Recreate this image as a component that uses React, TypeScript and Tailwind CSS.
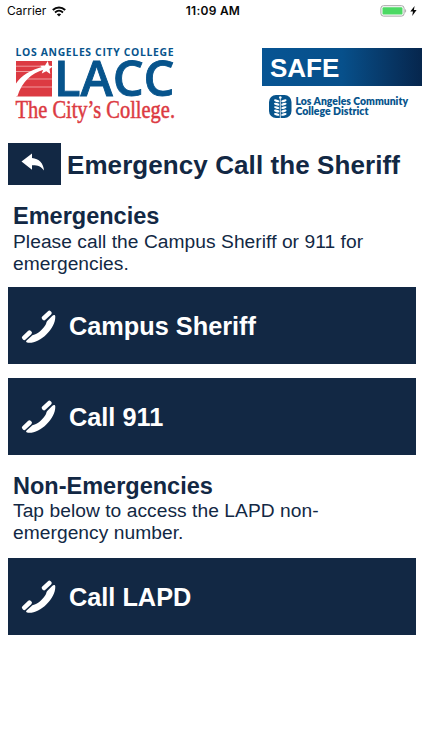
import React from 'react';

interface CallButtonProps {
  label: string;
}

interface SectionProps {
  title: string;
  children: React.ReactNode;
}

const PhoneIcon = () => (
  <svg className="w-[36px] h-[36px] shrink-0" viewBox="0 0 36 36" fill="#fff">
    <path d="M6 33.6C4.8 33.2 4.9 32.3 5.6 31.6L10.6 26.9C11.6 26 12.6 26.1 13.7 25.6C18.5 23.3 23 19 25 14.9C25.6 13.6 25.3 12.9 26.2 12L31.4 6.8C32.7 5.6 34.1 5.8 34.3 7.4C34.6 20.5 17 36 6 33.6Z" />
    <rect x="-5.8" y="-2.3" width="11.6" height="4.6" rx="1.9" transform="translate(25.7 6.5) rotate(-43)" />
    <rect x="-5.8" y="-2.3" width="11.6" height="4.6" rx="1.9" transform="translate(5.9 26.2) rotate(-43)" />
  </svg>
);

const StatusBar = () => (
  <div className="h-[22px] flex items-center justify-between pl-[7px] pr-[5px] font-['Inter'] text-[#080808]">
    <div className="flex items-center gap-[6px] w-[120px]">
      <span className="text-[12px]">Carrier</span>
      <svg className="w-[14px] h-[11px]" viewBox="0 0 14 11">
        <path d="M0.8 4C4.5 0.5 9.5 0.5 13.2 4" fill="none" stroke="#080808" strokeWidth="2" />
        <path d="M3 6.5C5.4 4.3 8.6 4.3 11 6.5" fill="none" stroke="#080808" strokeWidth="1.8" />
        <path d="M7 10.4L4.8 8.3C6.1 7.2 7.9 7.2 9.2 8.3Z" fill="#080808" />
      </svg>
    </div>
    <span className="text-[12px] font-semibold tracking-[0.25px] pl-[4px]">11:09 AM</span>
    <div className="flex items-center justify-end gap-[3px] w-[122px]">
      <svg className="w-[27px] h-[12px]" viewBox="0 0 27 12">
        <rect x="0.9" y="0.7" width="23.2" height="10.4" rx="2.6" fill="none" stroke="#a5a5a5" />
        <rect x="2.5" y="2.2" width="20" height="7.4" rx="1.2" fill="#4cd964" />
        <path d="M25.2 4C26.5 4.4 26.5 7.4 25.2 7.8Z" fill="#a5a5a5" />
      </svg>
      <svg className="w-[7px] h-[10px]" viewBox="0 0 7 10">
        <path d="M4.6 0L0.3 5.6H3L2.2 10L6.6 4.1H3.9Z" fill="#080808" />
      </svg>
    </div>
  </div>
);

const LaccLogo = () => (
  <svg className="w-[170px] h-[84px]" viewBox="10 42 170 84">
    <text x="15.5" y="55.7" textLength="158" fontFamily="Open Sans" fontWeight="700" fontSize="10.4" fill="#07548c">
      LOS ANGELES CITY COLLEGE
    </text>
    <rect x="16" y="61" width="36" height="35.5" fill="#dc3a42" />
    <path d="M16 66.2H44M16 71.5H36M24 79H52M20 87H52" stroke="#f2a5a8" strokeWidth="0.9" />
    <path d="M16 83.5C21 76 31 69.5 43 66.8L44 69.5C31 73.5 22.5 81 17.3 96.5H16Z" fill="#fff" />
    <path d="M47.8 61L48.9 65.5L53 66.3L49.5 69L50.3 74L46.3 71.3L41.8 73.5L43.3 69L40.2 65.8L45 65.5Z" fill="#fff" />
    <text x="54" y="96.3" textLength="120.5" lengthAdjust="spacingAndGlyphs" fontFamily="Open Sans" fontWeight="600" fontSize="48.5" fill="#07548c" stroke="#07548c" strokeWidth="0.9">
      LACC
    </text>
    <text x="15.5" y="117.7" textLength="159.5" lengthAdjust="spacingAndGlyphs" fontFamily="Liberation Serif" fontSize="24.5" fill="#dc3a42" stroke="#dc3a42" strokeWidth="0.5">
      The City’s College.
    </text>
  </svg>
);

const DistrictLogo = () => (
  <svg className="w-[154px] h-[32px]" viewBox="268 90 154 32">
    <rect x="269" y="95" width="22.5" height="23" rx="7" fill="#07548c" />
    <path d="M280.3 97V118" stroke="#fff" strokeWidth="0.8" />
    <circle cx="280.3" cy="97.5" r="1.3" fill="#fff" />
    <g fill="#fff">
      {[100.8, 104.2, 107.6, 111, 114.4].map((y) => (
        <g key={y}>
          <ellipse cx="276.7" cy={y} rx="2.8" ry="1.2" transform={`rotate(16 276.7 ${y})`} />
          <ellipse cx="283.9" cy={y} rx="2.8" ry="1.2" transform={`rotate(-16 283.9 ${y})`} />
        </g>
      ))}
    </g>
    <g fontFamily="Lato" fontWeight="800" fontSize="10.6" fill="#07548c">
      <text x="295.5" y="105.3" textLength="112.5" lengthAdjust="spacingAndGlyphs">Los Angeles Community</text>
      <text x="295.5" y="115.4" textLength="73" lengthAdjust="spacingAndGlyphs">College District</text>
    </g>
  </svg>
);

const Section = ({ title, children }: SectionProps) => (
  <section className="pl-[5px]">
    <h2 className="text-[23.5px] leading-[26px] font-bold">{title}</h2>
    <p className="pt-[1.5px] text-[19.2px] leading-[22px] tracking-[0.05px]">{children}</p>
  </section>
);

const CallButton = ({ label }: CallButtonProps) => (
  <button className="w-full h-[77px] flex items-center gap-[12px] pl-[13px] pt-[2px] bg-[#122844] text-white">
    <PhoneIcon />
    <span className="pt-[1px] text-[25.3px] font-bold whitespace-nowrap">{label}</span>
  </button>
);

export default function App() {
  return (
    <div className="w-[422px] h-[750px] overflow-hidden bg-white font-['Liberation_Sans',sans-serif] text-[#122844]">
      <StatusBar />

      <header className="flex justify-between pl-[10px] pt-[20px] h-[121px]">
        <LaccLogo />
        <div className="w-[160px] pt-[6px]">
          <div className="h-[38px] flex items-center pl-[8px] pt-[2px] bg-linear-to-r from-[#075493] via-[#07508b] to-[#06264d] text-white">
            <span className="text-[26px] font-bold">SAFE</span>
          </div>
          <div className="pl-[6px] pt-[4px]">
            <DistrictLogo />
          </div>
        </div>
      </header>

      <main className="pl-[8px] pr-[6px]">
        <div className="flex items-center gap-[6px] h-[42px]">
          <button className="w-[53px] h-[42px] bg-[#122844] flex items-center justify-center">
            <svg className="w-[24px] h-[20px] -ml-[3px] -mt-[2px]" viewBox="0 0 24 20">
              <path d="M0.5 8.5L11 0.5V5C18 5.5 22.5 10.5 23 17.5C20 13 16 12 11 12.2V16.8Z" fill="#fff" />
            </svg>
          </button>
          <h1 className="text-[26px] tracking-[0.08px] font-bold whitespace-nowrap pt-[2px]">Emergency Call the Sheriff</h1>
        </div>

        <div className="pt-[18px]">
          <Section title="Emergencies">
            Please call the Campus Sheriff or 911 for
            <br />
            emergencies.
          </Section>
        </div>

        <div className="flex flex-col gap-[13.5px] pt-[12.5px]">
          <CallButton label="Campus Sheriff" />
          <CallButton label="Call 911" />
        </div>

        <div className="pt-[18px] pb-[13.5px]">
          <Section title="Non-Emergencies">
            Tap below to access the LAPD non-
            <br />
            emergency number.
          </Section>
        </div>

        <CallButton label="Call LAPD" />
      </main>
    </div>
  );
}
